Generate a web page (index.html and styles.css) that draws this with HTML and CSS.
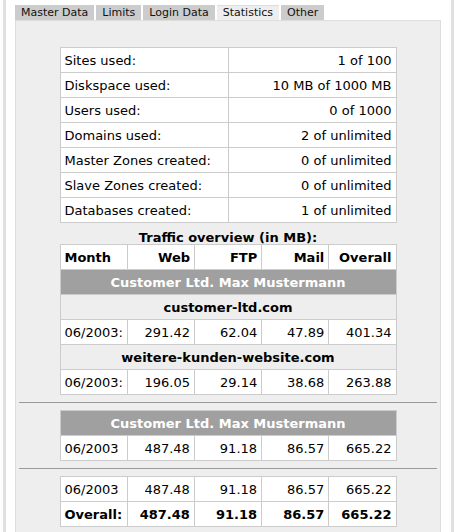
FILE: index.html
```html
<!DOCTYPE html>
<html>
<head>
<meta charset="utf-8">
<link rel="stylesheet" href="styles.css">
</head>
<body>
<div class="frame">
  <div class="tabs">
    <div class="tab">Master Data</div>
    <div class="tab">Limits</div>
    <div class="tab">Login Data</div>
    <div class="tab active">Statistics</div>
    <div class="tab">Other</div>
  </div>
  <div class="panel">
    <table class="stats">
      <tr><td>Sites used:</td><td class="r">1 of 100</td></tr>
      <tr><td>Diskspace used:</td><td class="r">10 MB of 1000 MB</td></tr>
      <tr><td>Users used:</td><td class="r">0 of 1000</td></tr>
      <tr><td>Domains used:</td><td class="r">2 of unlimited</td></tr>
      <tr><td>Master Zones created:</td><td class="r">0 of unlimited</td></tr>
      <tr><td>Slave Zones created:</td><td class="r">0 of unlimited</td></tr>
      <tr><td>Databases created:</td><td class="r">1 of unlimited</td></tr>
    </table>
    <div class="caption">Traffic overview (in MB):</div>
    <table class="traffic">
      <tr class="head"><td class="l">Month</td><td>Web</td><td>FTP</td><td>Mail</td><td>Overall</td></tr>
      <tr class="cust"><td colspan="5">Customer Ltd. Max Mustermann</td></tr>
      <tr class="dom"><td colspan="5">customer-ltd.com</td></tr>
      <tr><td class="l">06/2003:</td><td>291.42</td><td>62.04</td><td>47.89</td><td>401.34</td></tr>
      <tr class="dom"><td colspan="5">weitere-kunden-website.com</td></tr>
      <tr><td class="l">06/2003:</td><td>196.05</td><td>29.14</td><td>38.68</td><td>263.88</td></tr>
    </table>
    <hr class="sep">
    <table class="traffic">
      <tr class="cust"><td colspan="5">Customer Ltd. Max Mustermann</td></tr>
      <tr><td class="l">06/2003</td><td>487.48</td><td>91.18</td><td>86.57</td><td>665.22</td></tr>
    </table>
    <hr class="sep">
    <table class="traffic">
      <tr><td class="l">06/2003</td><td>487.48</td><td>91.18</td><td>86.57</td><td>665.22</td></tr>
      <tr class="total"><td class="l">Overall:</td><td>487.48</td><td>91.18</td><td>86.57</td><td>665.22</td></tr>
    </table>
  </div>
</div>
</body>
</html>
```

FILE: styles.css
```css
html, body {
  margin: 0;
  padding: 0;
  background: #fff;
  font-family: "DejaVu Sans", Verdana, sans-serif;
  color: #000;
}
.frame {
  margin-left: 3px;
  width: 451px;
  border-left: 3px solid #e0e0e0;
  border-right: 3px solid #e0e0e0;
  padding: 5px 0 0 9px;
  height: 532px;
  overflow: hidden;
  box-sizing: border-box;
}
.tabs {
  display: flex;
  gap: 2px;
  height: 15px;
}
.tab {
  font-size: 11px;
  line-height: 15px;
  height: 15px;
  padding: 0 6px;
  background: #cccccc;
  color: #111;
}
.tab.active {
  background: #eeeeee;
  box-shadow: inset 0 1px 0 #dddddd;
}
.panel {
  width: 426px;
  box-sizing: border-box;
  background: #eeeeee;
  border: 1px solid #dddddd;
  border-bottom: none;
  padding: 26px 0 20px;
  min-height: 520px;
}
table {
  border-collapse: collapse;
  margin: 0 auto;
  width: 337px;
  background: #fff;
  font-size: 13px;
}
td {
  border: 1px solid #cccccc;
  height: 24px;
  padding: 0 4px;
  white-space: nowrap;
}
.stats td {
  width: 50%;
}
.r { text-align: right; }
.caption {
  font-weight: bold;
  font-size: 13px;
  text-align: center;
  height: 21px;
  line-height: 29px;
}
.traffic td {
  text-align: right;
  width: 20%;
}
.traffic td.l { text-align: left; }
.traffic .head td { font-weight: bold; }
.traffic .cust td {
  background: #a0a0a0;
  color: #fff;
  font-weight: bold;
  text-align: center;
}
.traffic .dom td {
  background: #eeeeee;
  font-weight: bold;
  text-align: center;
}
.traffic .total td { font-weight: bold; }
.sep {
  border: none;
  border-top: 1px solid #999999;
  margin: 7px 3px 7px;
  height: 0;
}
```
